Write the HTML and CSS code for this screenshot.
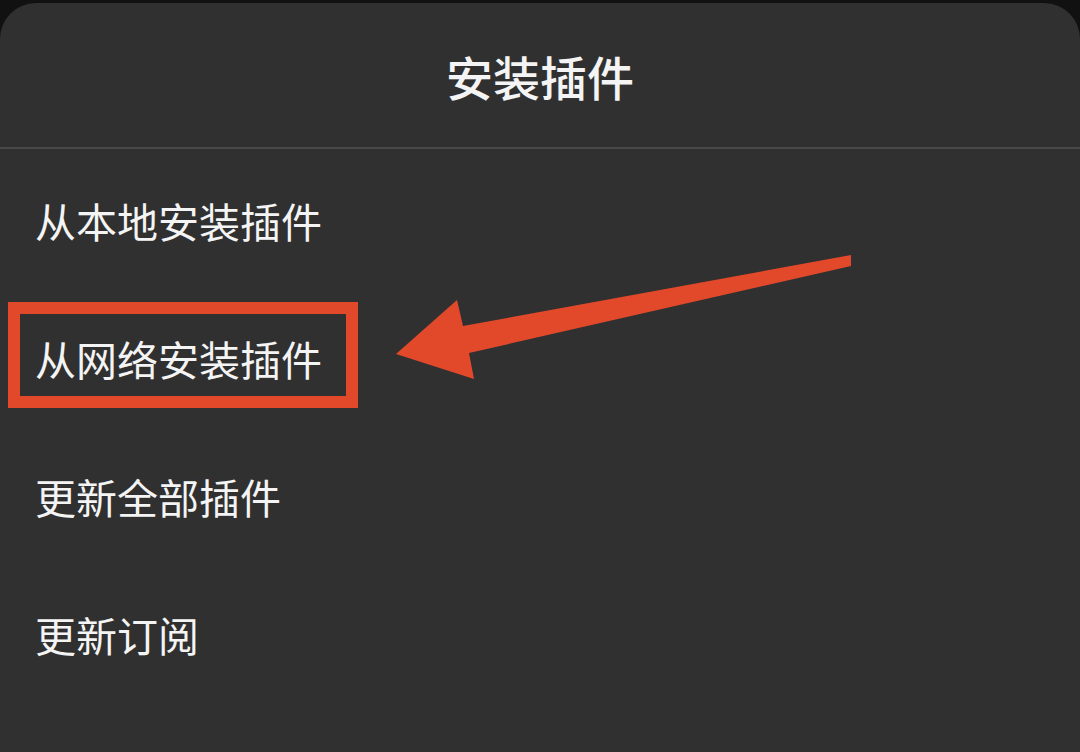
FILE: index.html
```html
<!DOCTYPE html>
<html lang="zh-CN">
<head>
<meta charset="utf-8">
<title>安装插件</title>
<link rel="stylesheet" href="styles.css">
</head>
<body>
<div class="sheet">
  <div class="sheet-header">
    <h1 class="sheet-title">安装插件</h1>
  </div>
  <ul class="menu">
    <li class="menu-item">从本地安装插件</li>
    <li class="menu-item">从网络安装插件</li>
    <li class="menu-item">更新全部插件</li>
    <li class="menu-item">更新订阅</li>
  </ul>
  <div class="highlight-box"></div>
  <svg class="arrow" width="1080" height="752" viewBox="0 0 1080 752">
    <polygon points="851,255 851,266 469,353 474,379 396,354 457,300 463,326" fill="#e2492b"/>
  </svg>
</div>
</body>
</html>
```
FILE: styles.css
```css
html, body {
  margin: 0;
  padding: 0;
  background: #111111;
  width: 1080px;
  height: 752px;
  overflow: hidden;
}
.sheet {
  position: relative;
  margin-top: 3px;
  height: 749px;
  background: #303030;
  border-radius: 36px 36px 0 0;
  font-family: "Noto Sans CJK SC", "Noto Sans", sans-serif;
  color: #f4f4f4;
}
.sheet-header {
  height: 144px;
  display: flex;
  align-items: center;
  justify-content: center;
  border-bottom: 2px solid #484848;
}
.sheet-title {
  margin: 0;
  font-size: 47px;
  font-weight: 500;
  line-height: 1;
}
.menu {
  list-style: none;
  margin: 0;
  padding: 2px 0 0 0;
}
.menu-item {
  height: 138px;
  display: flex;
  align-items: center;
  padding-left: 35px;
  font-size: 41px;
  line-height: 1;
}
.highlight-box {
  position: absolute;
  left: 8px;
  top: 299px;
  width: 326px;
  height: 82px;
  border: 12px solid #e2492b;
}
.arrow {
  position: absolute;
  left: 0;
  top: -3px;
  pointer-events: none;
}
```
